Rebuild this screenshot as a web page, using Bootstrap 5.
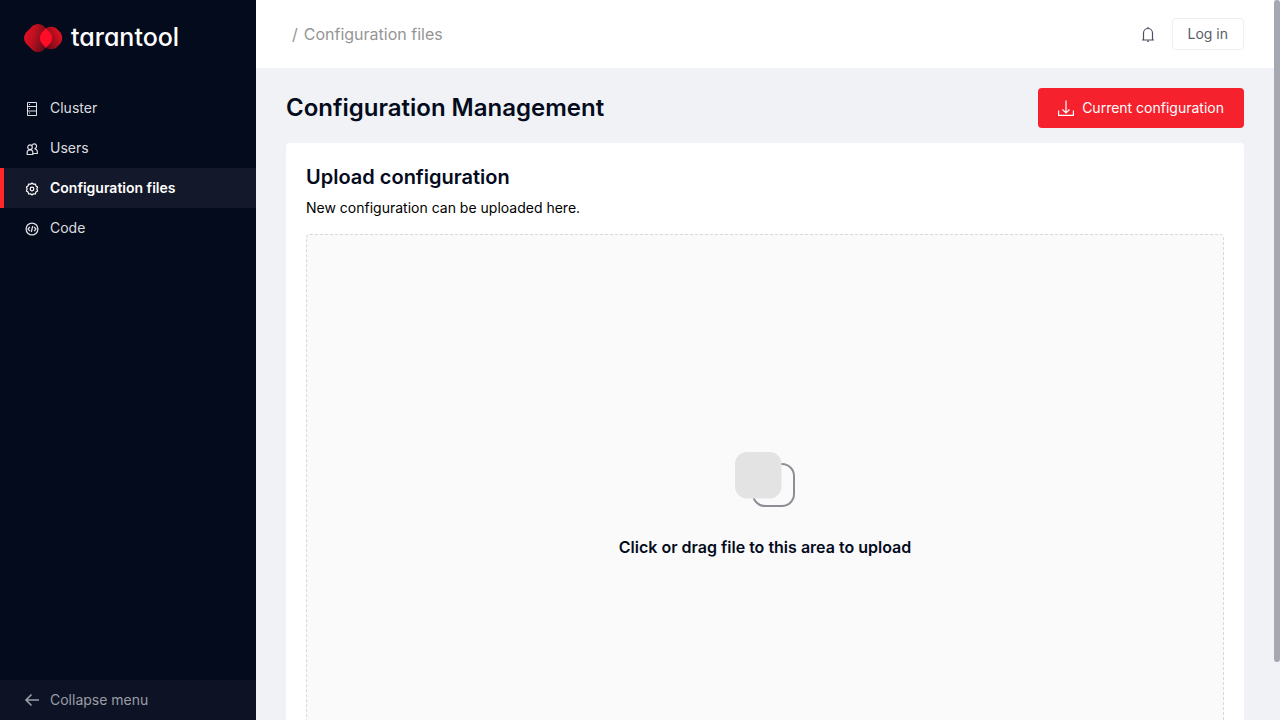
<!DOCTYPE html>
<html lang="en">
<head>
<meta charset="utf-8">
<meta name="viewport" content="width=device-width, initial-scale=1">
<title>Configuration files</title>
<link href="https://cdn.jsdelivr.net/npm/bootstrap@5.3.0/dist/css/bootstrap.min.css" rel="stylesheet">
<style>
body { font-family: Inter, "Open Sans", sans-serif; font-size: 14px; line-height: 22px; color: #000; background: #f0f2f5; }
.btn { line-height: 22px; }
.side { width: 256px; background: #040b1d; }
.brand { padding: 24px 24px 0; height: 88px; gap: 8px; }
.brand-name { font-size: 25px; line-height: 26px; font-weight: 500; color: #fff; font-feature-settings: "cv11"; }
.side .nav-link { height: 40px; padding: 0 24px; gap: 10px; color: rgba(255,255,255,.87); border-radius: 0; }
.side .nav-link svg { margin-top: 2px; }
.side .nav-link.active { background: #13182a; color: #fff; font-weight: 600; border-left: 4px solid #ff272c; padding-left: 20px; }
.side .collapse-btn { height: 40px; padding: 0 24px 1px; gap: 10px; background: #0d1325; color: #9b9da5; border-radius: 0; border: 0; font-size: 14px; }
.topbar { height: 69px; padding: 0 30px; border-bottom: 1px solid #f0f2f5; background: #fff; }
.crumbs { font-size: 16px; line-height: 24px; color: #959595; padding-left: 6px; }
.crumbs li::before { content: "/"; padding-right: 6px; }
.login { height: 32px; padding: 0 15px 1px; font-size: 14px; color: #5a5d66; border: 1px solid #f0f0f2; border-radius: 3px; background: #fff; }
.content-col { margin-right: 6px; scrollbar-width: none; }
.content-col::-webkit-scrollbar { display: none; }
.page { padding: 19px 30px 30px; }
.page h1 { font-size: 24px; line-height: 32px; font-weight: 600; color: #040b1d; }
.download { height: 40px; padding: 0 20px 1px; gap: 8px; font-size: 14px; color: #fff; background: #f5222d; border: 0; border-radius: 4px; }
.panel { background: #fff; border-radius: 4px; padding: 20px; margin-top: 15px; }
.panel h2 { font-size: 20px; line-height: 28px; font-weight: 600; color: #040b1d; }
.panel p { margin: 6px 0 15px; }
.drop { border: 1px dashed #d9d9d9; border-radius: 4px; background: #fafafa; padding: 217px 16px 180px; cursor: pointer; }
.drop-text { font-size: 16px; line-height: 24px; font-weight: 600; color: #040b1d; margin-top: 27px; }
.thumb { width: 6px; height: 92vh; background: #a5a8b0; border-radius: 3px; }
</style>
</head>
<body>
<div class="d-flex vh-100 overflow-hidden position-relative">
  <aside class="side d-flex flex-column flex-shrink-0">
    <a href="#" class="brand d-flex align-items-start text-decoration-none">
      <svg width="39" height="28" viewBox="0 0 39 28" class="flex-shrink-0" aria-hidden="true">
        <defs>
          <linearGradient id="lobeLeft" x1="0" y1="0.2" x2="1" y2=".5"><stop offset="0" stop-color="#e80e25"/><stop offset=".35" stop-color="#c2101f"/><stop offset=".9" stop-color="#5c0b19"/></linearGradient>
          <linearGradient id="lobeRight" x1="0" y1=".9" x2="1" y2=".4"><stop offset=".2" stop-color="#650b18"/><stop offset="1" stop-color="#df1022"/></linearGradient>
          <clipPath id="leftClip"><path d="M9 1.600Q14 -1.600 19 1.600L26 8.500Q30.400 14 26 19.500L19 26.400Q14 29.600 9 26.400L2 19.500Q-2 14 2 8.500Z"/></clipPath>
        </defs>
        <path fill="url(#lobeLeft)" d="M9 1.600Q14 -1.600 19 1.600L26 8.500Q30.400 14 26 19.500L19 26.400Q14 29.600 9 26.400L2 19.500Q-2 14 2 8.500Z"/>
        <path fill="url(#lobeRight)" d="M22 4Q27 1.500 32 4L36.500 8.500Q40 14 36.500 19.500L32 24Q27 26.500 22 24L17.500 19Q14 14 17.500 9Z"/>
        <path fill="#ff0d27" clip-path="url(#leftClip)" d="M22 4Q27 1.500 32 4L36.500 8.500Q40 14 36.500 19.500L32 24Q27 26.500 22 24L17.500 19Q14 14 17.500 9Z"/>
      </svg>
      <span class="brand-name">tarantool</span>
    </a>
    <nav class="nav flex-column flex-nowrap">
      <a class="nav-link d-flex align-items-center" href="#">
        <svg width="16" height="16" viewBox="0 0 16 16" fill="none" stroke="currentColor" aria-hidden="true"><path d="M3.500 1.500h9v13h-9zM3.500 5.500h9M3.500 10h9"/><path d="M5 3.500h1M5 7.500h1M5 12h1"/></svg>
        <span>Cluster</span></a>
      <a class="nav-link d-flex align-items-center" href="#">
        <svg width="16" height="16" viewBox="0 0 16 16" fill="none" stroke="currentColor" stroke-width="1.200" aria-hidden="true"><circle cx="6" cy="6.200" r="2.300"/><path d="M3.200 13.500v-2.200a2.500 2.500 0 0 1 2.500-2.500h.6a2.500 2.500 0 0 1 2.500 2.500v2.200z"/><path d="M8.200 4.200A2.300 2.300 0 1 1 10.500 7.500M10.500 7.900a2.700 2.700 0 0 1 2.800 2.700v1.900H9"/></svg>
        <span>Users</span></a>
      <a class="nav-link active d-flex align-items-center" aria-current="page" href="#">
        <svg width="16" height="16" viewBox="0 0 16 16" fill="none" stroke="currentColor" stroke-width="1.200" aria-hidden="true"><path stroke-linejoin="round" d="M6.600 3.200L8 2l1.400 1.200 2-.2.500 1.900 1.700 1-.7 2.100.7 2.100-1.700 1-.5 1.900-2-.2L8 14l-1.400-1.200-2 .2-.5-1.900-1.700-1L3.100 8l-.7-2.100 1.700-1L4.600 3z"/><circle cx="8" cy="8" r="1.800"/></svg>
        <span>Configuration files</span></a>
      <a class="nav-link d-flex align-items-center" href="#">
        <svg width="16" height="16" viewBox="0 0 16 16" fill="none" stroke="currentColor" stroke-width="1.300" aria-hidden="true"><circle cx="8" cy="8" r="5.900"/><path d="M5.900 5.800L4 8l1.900 2.200M10.100 5.800L12 8l-1.900 2.200M8.700 5l-1.400 6"/></svg>
        <span>Code</span></a>
    </nav>
    <button type="button" class="btn collapse-btn d-flex align-items-center mt-auto text-start">
      <svg width="16" height="16" viewBox="0 0 16 16" fill="none" stroke="currentColor" stroke-width="1.600" aria-hidden="true"><path d="M15 8H2M7.500 2.500L2 8l5.500 5.500"/></svg>
      <span>Collapse menu</span></button>
  </aside>
  <div class="content-col flex-grow-1 overflow-auto">
    <header class="topbar d-flex align-items-center justify-content-between">
      <nav aria-label="breadcrumb"><ol class="crumbs list-unstyled mb-0"><li aria-current="page">Configuration files</li></ol></nav>
      <div class="d-flex align-items-center gap-3">
        <button type="button" class="btn p-0 border-0 d-flex" aria-label="Notifications">
          <svg width="16" height="16" viewBox="0 0 16 16" fill="none" stroke="#4b4f60" stroke-width="1.200" aria-hidden="true"><path d="M3.500 14V7a4.500 4.500 0 0 1 9 0v7M2 14h12M8 1v1.500"/><path d="M7 15.200h2"/></svg>
        </button>
        <button type="button" class="btn login">Log in</button>
      </div>
    </header>
    <main class="page">
      <div class="d-flex align-items-center justify-content-between">
        <h1 class="mb-0">Configuration Management</h1>
        <button type="button" class="btn download d-flex align-items-center">
          <svg width="16" height="16" viewBox="0 0 16 16" fill="none" stroke="currentColor" stroke-width="1.200" aria-hidden="true"><path d="M8 .5v12M4.500 9.500L8 13 11.500 9.500M.6 10.500v4.900h14.800v-4.900"/></svg>
          <span>Current configuration</span></button>
      </div>
      <section class="panel">
        <h2 class="mb-0">Upload configuration</h2>
        <p>New configuration can be uploaded here.</p>
        <input type="file" id="configFile" class="visually-hidden">
        <label for="configFile" class="drop d-flex flex-column align-items-center">
          <svg width="60" height="56" viewBox="0 0 60 56" aria-hidden="true"><rect x="18" y="12" width="41" height="42" rx="12" fill="none" stroke="#8c8e96" stroke-width="2"/><rect x="0" y="0" width="46.500" height="46.500" rx="12" fill="#e3e3e3"/></svg>
          <span class="drop-text">Click or drag file to this area to upload</span>
        </label>
      </section>
    </main>
  </div>
  <div class="thumb position-absolute top-0 end-0"></div>
</div>
<script src="https://cdn.jsdelivr.net/npm/bootstrap@5.3.0/dist/js/bootstrap.bundle.min.js"></script>
</body>
</html>
